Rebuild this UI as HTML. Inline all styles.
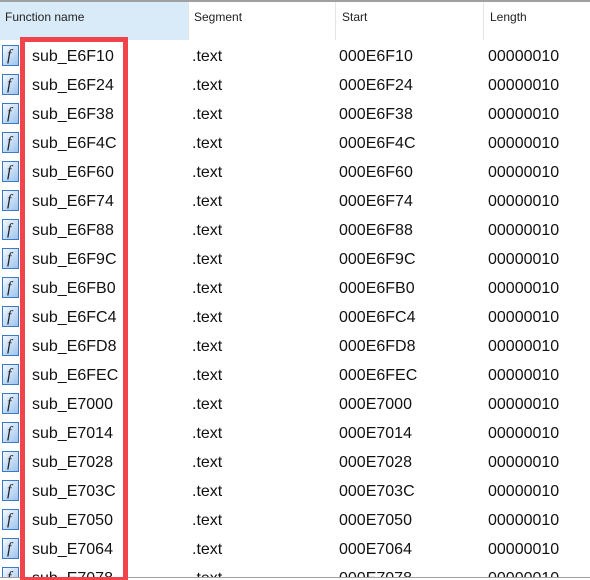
<!DOCTYPE html><html><head><style>
html,body{margin:0;width:590px;height:580px;overflow:hidden;background:#fff;font-family:"Liberation Sans",sans-serif;position:relative}
.top{position:absolute;left:0;top:0;width:590px;height:2px;background:#a0a0a0}
.hd{position:absolute;top:2px;height:38px;font-size:12px;color:#222;padding:8px 0 0 5px;box-sizing:border-box}
.sep{position:absolute;top:2px;width:1px;height:38px;background:#e5e5e5}
#rows{position:absolute;left:0;top:0;width:590px;height:577px;overflow:hidden}
.row{position:absolute;left:0;width:590px;height:29px;font-size:16px;color:#111}
.row span{position:absolute;top:6px}
.ic{position:absolute;left:2px;top:3px;width:17px;height:21px;border:1px solid #3a78c8;background:linear-gradient(135deg,#f4f9ff,#9cc4ee);box-sizing:border-box}
.ic i{position:absolute;left:4px;top:1px;font:italic 16px "Liberation Serif",serif;color:#222}
.red{position:absolute;left:20px;top:37px;width:108px;height:545px;border:5px solid #f0444a;box-sizing:border-box}
.bot{position:absolute;left:0;top:577px;width:590px;height:3px;background:#fff;border-top:1px solid #a0a0a0}
</style></head><body>
<div class="top"></div>
<div class="hd" style="left:0;width:188px;background:#d9ebf9">Function name</div>
<div class="hd" style="left:189px">Segment</div>
<div class="hd" style="left:337px">Start</div>
<div class="hd" style="left:485px">Length</div>
<div class="sep" style="left:188px"></div><div class="sep" style="left:335px"></div><div class="sep" style="left:483px"></div>
<div id="rows"></div>
<script>
var n=["E6F10","E6F24","E6F38","E6F4C","E6F60","E6F74","E6F88","E6F9C","E6FB0","E6FC4","E6FD8","E6FEC","E7000","E7014","E7028","E703C","E7050","E7064","E7078"],h="";
n.forEach(function(s,i){h+='<div class="row" style="top:'+(42+29*i)+'px"><div class="ic"><i>f</i></div><span style="left:32px">sub_'+s+'</span><span style="left:192px">.text</span><span style="left:339px">000'+s+'</span><span style="left:488px">00000010</span></div>';});
document.getElementById("rows").innerHTML=h;
</script>
<div class="bot"></div>
<div class="red"></div>
</body></html>
